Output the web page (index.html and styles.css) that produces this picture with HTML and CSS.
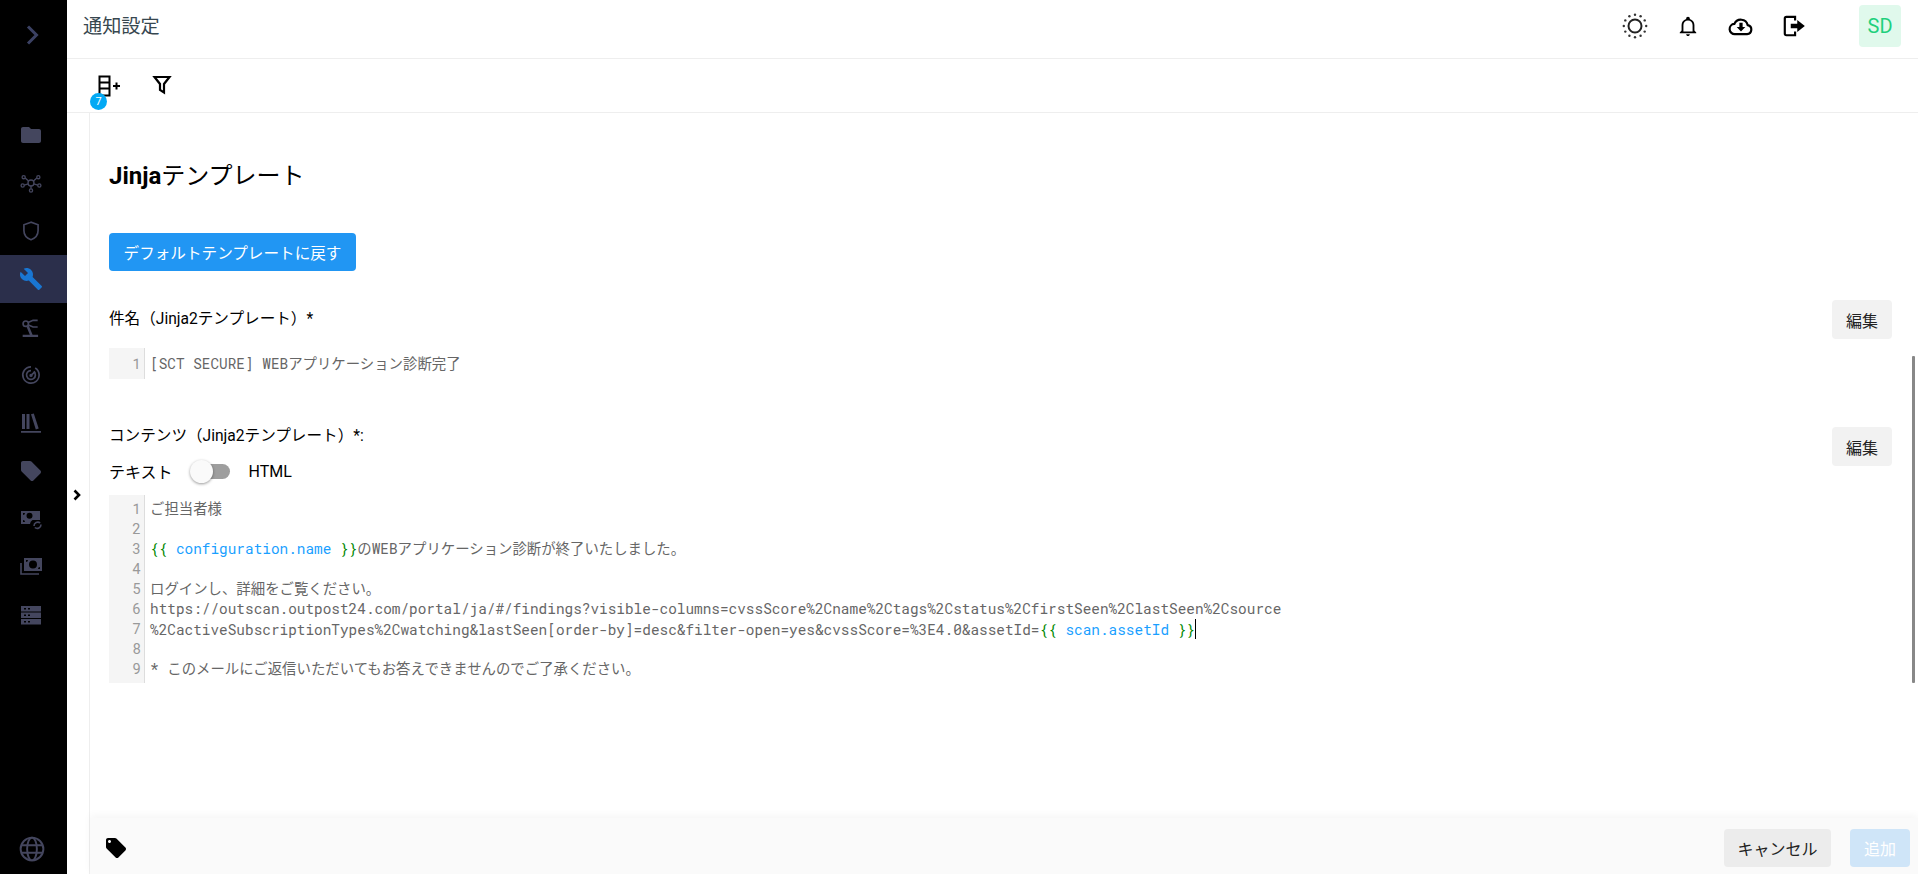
FILE: index.html
```html
<!DOCTYPE html>
<html lang="ja">
<head>
<meta charset="utf-8">
<title>通知設定</title>
<link rel="stylesheet" href="styles.css">
</head>
<body>
<aside class="sidebar">
  <div class="side-toggle"><svg class="side-chevron" viewBox="0 0 24 24"><path d="M8 3.500l8.500 8.500-8.500 8.500" /></svg></div>
  <nav class="side-nav">
    <a class="side-item"><svg class="ic fill" viewBox="0 0 24 24"><path d="M10 4H4c-1.100 0-2 .9-2 2v12c0 1.100.9 2 2 2h16c1.100 0 2-.9 2-2V8c0-1.100-.9-2-2-2h-8l-2-2z"/></svg></a>
    <a class="side-item"><svg class="ic line" viewBox="0 0 24 24"><circle cx="12" cy="12" r="3.600"/><circle cx="3.200" cy="5" r="1.900"/><circle cx="20.800" cy="5" r="1.900"/><circle cx="2" cy="15" r="1.900"/><circle cx="22" cy="15" r="1.900"/><circle cx="12" cy="21" r="1.900"/><path d="M5 6l4 3.500M19 6l-4 3.500M3.800 14.500l5-1.500M20.200 14.500l-5-1.500M12 15.600V19"/></svg></a>
    <a class="side-item"><svg class="ic line heavy" viewBox="0 0 24 24"><path d="M12 1.500L3.500 4.500v7c0 5 3.500 9.300 8.500 11 5-1.700 8.500-6 8.500-11v-7z"/></svg></a>
    <a class="side-item active"><svg class="ic fill" viewBox="0 0 24 24"><path d="M22.700 19l-9.100-9.100c.9-2.300.4-5-1.500-6.900-2-2-5-2.400-7.400-1.300L9 6 6 9 1.600 4.700C.4 7.100.9 10.100 2.900 12.100c1.900 1.900 4.600 2.400 6.900 1.500l9.100 9.100c.4.4 1 .4 1.400 0l2.300-2.300c.5-.4.5-1.100.1-1.400z"/></svg></a>
    <a class="side-item"><svg class="ic line heavy" viewBox="0 0 24 24"><circle cx="5.700" cy="8" r="3.200"/><path class="thick" d="M8 11l4.500 11M2 22.800h18.500"/><path d="M8.500 6.500l6-2.500h5.500M8.800 9.500l5.700 2.500h5.500"/></svg></a>
    <a class="side-item"><svg class="ic line heavy" viewBox="0 0 24 24"><path d="M12 2.200a9.800 9.800 0 1 0 5 1.400"/><path d="M12 6.700a5.300 5.300 0 1 0 3.200 1.100"/><path d="M17 8l-5 4.500"/><circle cx="12" cy="12.500" r="1"/></svg></a>
    <a class="side-item"><svg class="ic fill" viewBox="0 0 24 24"><path d="M3 3h3v15H3zM7.500 3h3v15h-3zM12 3.300l2.800-.7 4.900 15-2.900.8zM2 20h20v1.800H2z"/></svg></a>
    <a class="side-item"><svg class="ic fill" viewBox="0 0 24 24"><path d="M21.400 11.600l-9-9C12 2.200 11.500 2 11 2H4c-1.100 0-2 .9-2 2v7c0 .6.200 1.100.6 1.400l9 9c.4.400.9.600 1.400.600s1.100-.2 1.400-.6l7-7c.4-.4.600-.9.600-1.400 0-.6-.2-1.100-.6-1.400z"/></svg></a>
    <a class="side-item"><svg class="ic line-fill" viewBox="0 0 24 24"><path class="f" fill-rule="evenodd" d="M2 4h19v9h-7.500a5 5 0 0 0-2.500 4H2zm8.500 1.800a3 3 0 1 0 0 6 3 3 0 0 0 0-6zM4 6v2a2 2 0 0 0 2-2zM4 15h2a2 2 0 0 0-2-2z"/><path class="s" d="M15 19a3.800 3.800 0 0 1 6.200-3M22 17.500a3.800 3.800 0 0 1-6.200 3"/></svg></a>
    <a class="side-item"><svg class="ic line-fill" viewBox="0 0 24 24"><path class="f" fill-rule="evenodd" d="M5 3h18v13H5zm9 2.500a4 4 0 1 0 0 8 4 4 0 0 0 0-8zM7 5v2a2 2 0 0 0 2-2zM21 14v-2a2 2 0 0 0-2 2z"/><path class="s" d="M2 8v11h18"/></svg></a>
    <a class="side-item"><svg class="ic fill" viewBox="0 0 24 24"><path fill-rule="evenodd" d="M2 3h20v5.500H2zm3 2v1.500h2V5zm4 0v1.500h2V5zM2 9.500h20V15H2zm3 2V13h2v-1.500zm4 0V13h2v-1.500zM2 16h20v5.500H2zm3 2v1.500h2V18zm4 0v1.500h2V18z"/></svg></a>
  </nav>
  <div class="side-bottom"><svg class="ic globe" viewBox="0 0 24 24"><circle cx="12" cy="12" r="10.500"/><ellipse cx="12" cy="12" rx="4.500" ry="10.500"/><path d="M2 8.500h20M2 15.500h20"/></svg></div>
</aside>
<div class="main">
  <header class="topbar">
    <h1 class="page-title">通知設定</h1>
    <div class="top-actions">
      <svg class="top-ic" viewBox="0 0 26 26"><circle class="sun" cx="13" cy="13" r="6.500"/><g class="rays"><circle cx="13" cy="1.800" r="1.200"/><circle cx="18.600" cy="3.300" r="1.200"/><circle cx="22.700" cy="7.400" r="1.200"/><circle cx="24.200" cy="13" r="1.200"/><circle cx="22.700" cy="18.600" r="1.200"/><circle cx="18.600" cy="22.700" r="1.200"/><circle cx="13" cy="24.200" r="1.200"/><circle cx="7.400" cy="22.700" r="1.200"/><circle cx="3.300" cy="18.600" r="1.200"/><circle cx="1.800" cy="13" r="1.200"/><circle cx="3.300" cy="7.400" r="1.200"/><circle cx="7.400" cy="3.300" r="1.200"/></g></svg>
      <svg class="top-ic bell" viewBox="0 0 24 24"><path fill-rule="evenodd" d="M10 21h4c0 1.100-.9 2-2 2s-2-.9-2-2zm11-2v1H3v-1l2-2v-6c0-3.100 2-5.800 5-6.700V4c0-1.100.9-2 2-2s2 .9 2 2v.3c3 .9 5 3.600 5 6.700v6l2 2zm-4-8c0-2.800-2.200-5-5-5s-5 2.200-5 5v7h10v-7z"/></svg>
      <svg class="top-ic" viewBox="0 0 24 24"><path class="outline" d="M6.500 19.500a4.700 4.700 0 0 1-.6-9.400 6.500 6.500 0 0 1 12.300 1.100 4.200 4.200 0 0 1-.6 8.300z"/><path d="M10.500 9h3v4h2.500L12 17l-4-4h2.500z"/></svg>
      <svg class="top-ic" viewBox="0 0 24 24"><path class="outline" d="M13 7V3.500H5a1.500 1.500 0 0 0-1.500 1.500v14A1.500 1.500 0 0 0 5 20.500h8V17"/><path d="M15 6.500L22 12l-7 5.500V14H9v-4h6z"/></svg>
      <div class="avatar">SD</div>
    </div>
  </header>
  <div class="toolbar">
    <button class="tool-btn has-badge">
      <svg class="tool-ic" viewBox="0 0 24 24"><path class="outline" d="M3.500 3.500h10v19h-8.500a1.500 1.500 0 0 1-1.500-1.500zM3.500 9.500h10M3.500 15.500h10"/><path class="outline" d="M17 13h7M20.500 9.500v7"/></svg>
      <span class="badge">7</span>
    </button>
    <button class="tool-btn">
      <svg class="tool-ic" viewBox="0 0 24 24"><path class="outline funnel" d="M4.500 4h15l-5.500 7v8.500l-4-2.500V11z"/></svg>
    </button>
  </div>
  <div class="workspace">
    <div class="rail">
      <svg class="rail-chevron" viewBox="0 0 12 12"><path d="M3.500 1.500L8 6l-4.500 4.500"/></svg>
    </div>
    <div class="panel">
      <div class="content">
        <h2 class="section-title"><b>Jinja</b>テンプレート</h2>
        <button class="btn-primary">デフォルトテンプレートに戻す</button>
        <div class="field field-subject">
          <div class="field-main">
            <label class="field-label">件名（Jinja2テンプレート）*</label>
            <div class="editor editor-single">
              <div class="line"><span class="gutter">1</span><span class="code">[SCT SECURE] WEBアプリケーション診断完了</span></div>
            </div>
          </div>
          <button class="btn-edit">編集</button>
        </div>
        <div class="field field-body">
          <div class="field-main">
            <label class="field-label">コンテンツ（Jinja2テンプレート）*:</label>
            <div class="switch-row">
              <span>テキスト</span>
              <span class="switch"><span class="knob"></span></span>
              <span>HTML</span>
            </div>
            <div class="editor">
              <div class="line"><span class="gutter">1</span><span class="code">ご担当者様</span></div>
              <div class="line"><span class="gutter">2</span><span class="code"></span></div>
              <div class="line"><span class="gutter">3</span><span class="code"><span class="br">{{</span> <span class="var">configuration.name</span> <span class="br">}}</span>のWEBアプリケーション診断が終了いたしました。</span></div>
              <div class="line"><span class="gutter">4</span><span class="code"></span></div>
              <div class="line"><span class="gutter">5</span><span class="code">ログインし、詳細をご覧ください。</span></div>
              <div class="line"><span class="gutter">6</span><span class="code">https://outscan.outpost24.com/portal/ja/#/findings?visible-columns=cvssScore%2Cname%2Ctags%2Cstatus%2CfirstSeen%2ClastSeen%2Csource</span></div>
              <div class="line"><span class="gutter">7</span><span class="code">%2CactiveSubscriptionTypes%2Cwatching&amp;lastSeen[order-by]=desc&amp;filter-open=yes&amp;cvssScore=%3E4.0&amp;assetId=<span class="br">{{</span> <span class="var">scan.assetId</span> <span class="br">}}</span><span class="cursor"></span></span></div>
              <div class="line"><span class="gutter">8</span><span class="code"></span></div>
              <div class="line"><span class="gutter">9</span><span class="code">* このメールにご返信いただいてもお答えできませんのでご了承ください。</span></div>
            </div>
          </div>
          <button class="btn-edit">編集</button>
        </div>
        <div class="scroll-thumb"></div>
      </div>
      <footer class="footer">
        <svg class="footer-tag" viewBox="0 0 24 24"><path fill-rule="evenodd" d="M21.400 11.600l-9-9C12 2.200 11.500 2 11 2H4c-1.100 0-2 .9-2 2v7c0 .6.200 1.100.6 1.400l9 9c.4.400.9.600 1.400.600s1.100-.2 1.400-.6l7-7c.4-.4.600-.9.600-1.400 0-.6-.2-1.100-.6-1.400zM5.500 7C4.700 7 4 6.300 4 5.500S4.700 4 5.500 4 7 4.700 7 5.500 6.300 7 5.500 7z"/></svg>
        <div class="footer-actions">
          <button class="btn-cancel">キャンセル</button>
          <button class="btn-add">追加</button>
        </div>
      </footer>
    </div>
  </div>
</div>
</body>
</html>
```
FILE: styles.css
```css
* { box-sizing: border-box; }
html, body { height: 100%; }
body {
  margin: 0;
  display: flex;
  height: 874px;
  overflow: hidden;
  font-family: Roboto, "Noto Sans CJK JP", sans-serif;
  font-size: 16px;
  color: #000;
  background: #fff;
}
button { font: inherit; border: 0; cursor: pointer; }

.sidebar { width: 67px; flex: none; background: #000; display: flex; flex-direction: column; }
.side-toggle { height: 70px; padding-right: 3px; display: flex; align-items: center; justify-content: center; }
.side-chevron { width: 24px; height: 24px; fill: none; stroke: #3b4163; stroke-width: 3; }
.side-nav { margin-top: 41px; display: flex; flex-direction: column; }
.side-item { height: 48px; padding-right: 5px; display: flex; align-items: center; justify-content: center; color: #44465e; }
.side-item.active { background: #2b2f4b; color: #1976d2; }
.ic { width: 24px; height: 24px; }
.fill { fill: currentColor; }
.line { fill: none; stroke: currentColor; stroke-width: 1.600; }
.line.heavy { stroke-width: 2; }
.line .thick { stroke-width: 3; }
.line-fill .f { fill: currentColor; }
.line-fill .s { fill: none; stroke: currentColor; stroke-width: 1.600; }
.side-bottom { margin-top: auto; height: 38px; padding-right: 3px; display: flex; justify-content: center; color: #44465e; }
.globe { width: 26px; height: 26px; fill: none; stroke: currentColor; stroke-width: 1.800; }

.main { flex: 1; min-width: 0; display: flex; flex-direction: column; }
.topbar { height: 59px; flex: none; border-bottom: 1px solid #eeeeee; display: flex; align-items: center; justify-content: space-between; padding: 0 17px 6px 16px; }
.page-title { margin: 0 0 2px; font-size: 19.200px; font-weight: 400; color: #37474f; }
.top-actions { display: flex; align-items: center; }
.top-ic { width: 26px; height: 26px; margin-right: 27px; fill: #000; }
.top-ic.bell { width: 22px; height: 22px; margin: 0 29px 0 2px; }
.top-ic .outline { fill: none; stroke: #000; stroke-width: 2; }
.top-ic .sun { fill: none; stroke: #222; stroke-width: 2; }
.top-ic .rays { fill: #333; }
.avatar { width: 42px; height: 42px; margin-left: 25px; border-radius: 4px; background: #e0f9ec; color: #1fd07d; font-size: 20px; display: flex; align-items: center; justify-content: center; }

.toolbar { height: 54px; flex: none; border-bottom: 1px solid #eeeeee; display: flex; align-items: center; padding: 0 0 2px 27px; gap: 26px; }
.tool-btn { position: relative; width: 28px; height: 28px; padding: 0; background: none; display: flex; align-items: center; justify-content: center; }
.tool-ic { width: 24px; height: 24px; }
.tool-ic .outline { fill: none; stroke: #000; stroke-width: 2; }
.tool-ic .funnel { stroke-width: 2.200; }
.badge { position: absolute; left: -4px; top: 22px; width: 17px; height: 17px; border-radius: 50%; background: #03a9f4; color: #fff; font-size: 11px; display: flex; align-items: center; justify-content: center; }

.workspace { flex: 1; min-height: 0; display: flex; }
.rail { width: 23px; flex: none; border-right: 1px solid #eeeeee; display: flex; align-items: center; justify-content: flex-start; padding-left: 4px; padding-top: 3px; }
.rail-chevron { width: 12px; height: 12px; fill: none; stroke: #000; stroke-width: 2.600; }

.panel { flex: 1; min-width: 0; display: flex; flex-direction: column; }
.content { position: relative; flex: 1; min-height: 0; padding: 43px 26px 0 19px; }
.section-title { margin: 0 0 37px; font-size: 24px; line-height: 40px; font-weight: 400; }
.section-title b { font-weight: 700; }
.btn-primary { display: block; height: 38px; width: 247px; padding: 0; border-radius: 4px; background: #2196f3; color: #fff; font-size: 15.600px; }

.field { display: flex; justify-content: space-between; align-items: flex-start; }
.field-subject { margin-top: 29px; }
.field-body { margin-top: 48px; }
.field-main { flex: 1; min-width: 0; }
.field-label { display: block; font-size: 15.600px; }
.field-subject .field-label { margin-top: 7px; line-height: 24px; }
.field-body .field-label { line-height: 18px; }
.btn-edit { width: 60px; height: 39px; padding: 0; border-radius: 4px; background: #f2f2f2; color: #222; flex: none; }

.switch-row { display: flex; align-items: center; height: 24px; margin-top: 14px; }
.switch { position: relative; width: 36px; height: 15px; margin: 0 19px 0 21px; border-radius: 8px; background: #9e9e9e; }
.knob { position: absolute; left: -4px; top: -4px; width: 23px; height: 23px; border-radius: 50%; background: #fafafa; box-shadow: 0 1px 3px rgba(0,0,0,.4); }

.editor { margin-top: 12px; padding: 4px 0; font-family: "Roboto Mono", "Liberation Mono", "Noto Sans CJK JP", monospace; font-size: 14.400px; color: #666; background: linear-gradient(to right, #f5f5f5 35px, #ddd 35px, #ddd 36px, transparent 36px); }
.editor-single { margin-top: 17px; }
.line { display: flex; height: 20px; line-height: 20px; }
.editor-single .line { height: 23px; line-height: 23px; }
.gutter { width: 36px; flex: none; color: #999; text-align: right; padding-right: 4px; }
.code { padding-left: 5px; white-space: pre; }
.br { color: #080; }
.var { color: #1a9fff; }
.cursor { display: inline-block; width: 1px; height: 20px; background: #000; vertical-align: text-bottom; }

.scroll-thumb { position: absolute; right: 3px; top: 243px; width: 3px; height: 327px; background: #888; border-radius: 1px; }

.footer { height: 56px; flex: none; background: #fafafa; box-shadow: 0 -3px 8px rgba(0,0,0,.04); display: flex; align-items: center; justify-content: space-between; padding: 4px 8px 0 14px; position: relative; }
.footer-tag { width: 24px; height: 24px; fill: #000; }
.footer-actions { display: flex; gap: 19px; }
.btn-cancel { width: 107px; height: 38px; border-radius: 4px; background: #ececec; color: #222; }
.btn-add { width: 60px; height: 38px; border-radius: 4px; background: #cfe5f8; color: #fff; }
```
